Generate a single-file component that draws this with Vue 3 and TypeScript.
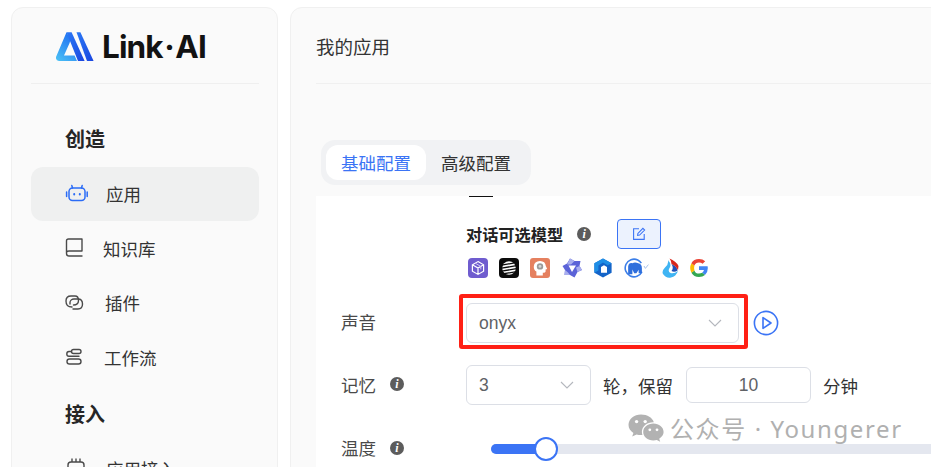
<script setup lang="ts">
const createItems = [
  { key: 'app', label: '应用', active: true },
  { key: 'book', label: '知识库', active: false },
  { key: 'plugin', label: '插件', active: false },
  { key: 'flow', label: '工作流', active: false },
]
</script>

<template>
  <div class="page">
    <aside class="sidebar">
      <div class="logo">
        <svg class="logo__mark" width="38" height="30" viewBox="0 0 38 30">
          <defs>
            <linearGradient id="logoLeft" x1="0" y1="1" x2="0.6" y2="0">
              <stop offset="0" stop-color="#4cc3f5" />
              <stop offset="1" stop-color="#1f6ff2" />
            </linearGradient>
            <linearGradient id="logoRight" x1="0" y1="0" x2="1" y2="1">
              <stop offset="0" stop-color="#2a78f5" />
              <stop offset="1" stop-color="#1a46e0" />
            </linearGradient>
          </defs>
          <path d="M10.5 0.2 L0 25 Q-0.4 29 3 29 L21 29 L18.6 23.4 L8 23.4 L13.6 11 L14.6 7 Z" fill="url(#logoLeft)" />
          <path d="M10.5 0.2 L15.6 0.2 L28.6 29 L22 29 Z" fill="url(#logoRight)" />
          <path d="M20.5 0.2 L24.4 0.2 L37.6 29 L31 29 Z" fill="url(#logoRight)" />
        </svg>
        <span class="logo__text">Link<span class="logo__dot">·</span>AI</span>
      </div>

      <div class="nav-title nav-title--first">创造</div>
      <div
        v-for="item in createItems"
        :key="item.key"
        class="nav-item"
        :class="['nav-item--' + item.key, { 'nav-item--active': item.active }]"
      >
        <svg class="nav-item__icon" width="24" height="24" viewBox="0 0 24 24" fill="none" stroke-linecap="round" stroke-linejoin="round">
          <g v-if="item.key === 'app'" stroke="#2b6cf6" stroke-width="1.5">
            <rect x="5" y="7" width="16" height="12.5" rx="3.5" />
            <path d="M8.5 7 L7.8 4.4 M17.5 7 L18.2 4.4 M2.6 11 V15.5 M23.2 11 V15.5" />
            <path d="M10.2 13 V13.5 M15.8 13 V13.5" stroke-width="2" />
          </g>
          <g v-else-if="item.key === 'book'" stroke="#4a4a4a" stroke-width="1.4">
            <path d="M2.5 17 V5 Q2.5 3 4.5 3 H18 V15 H5 Q2.5 15 2.5 17.5 Q2.5 20 5 20 H18" />
          </g>
          <g v-else-if="item.key === 'plugin'" stroke="#4a4a4a" stroke-width="1.4">
            <path d="M8 16 C3.5 16 2 14 2 10 C2 6.5 4 5 7 5 H11 C13.5 5 14.5 7 14.5 9.5 C14.5 12.5 12.5 14 9.5 14" />
            <path d="M6 13 V11.5 C6 9.5 8 8 10 8 H14 C17 8 18.5 10 18.5 13 C18.5 16 17 18 14 18 H9" />
          </g>
          <g v-else stroke="#4a4a4a" stroke-width="1.4">
            <rect x="7.5" y="4.5" width="9.5" height="4" rx="2" />
            <rect x="3" y="14" width="14" height="5" rx="2.5" />
            <path d="M7.5 6.5 H5 Q2.8 6.5 2.8 9 Q2.8 11.2 5 11.2 H15" />
          </g>
        </svg>
        <span>{{ item.label }}</span>
      </div>

      <div class="nav-title">接入</div>
      <div class="nav-item nav-item--app">
        <svg class="nav-item__icon" width="24" height="24" viewBox="0 0 24 24" fill="none" stroke="#4a4a4a" stroke-width="1.4">
          <rect x="4" y="6" width="16" height="14" rx="3" />
          <path d="M8 6 V2.5 M12 6 V2.5 M16 6 V2.5" />
        </svg>
        <span>应用接入</span>
      </div>
    </aside>

    <main class="main">
      <header class="main__head">我的应用</header>

      <div class="tabs">
        <div class="tabs__tab tabs__tab--active">基础配置</div>
        <div class="tabs__tab">高级配置</div>
      </div>

      <section class="form">
        <div class="form__stub"></div>

        <div class="models">
          <div class="models__head">
            <span class="models__title">对话可选模型</span>
            <i class="info">i</i>
            <button class="models__edit" type="button">
              <svg width="14" height="14" viewBox="0 0 14 14" fill="none" stroke="#3b74f5" stroke-width="1.1">
                <path d="M7 1.8 H1.6 V12.4 H12.2 V7" />
                <path d="M5.6 8.4 L5.9 6.4 L10.9 1.4 L12.6 3.1 L7.6 8.1 Z" />
              </svg>
            </button>
          </div>
          <div class="models__icons">
            <svg width="20" height="20" viewBox="0 0 20 20">
              <rect width="20" height="20" rx="4" fill="#6f5ccf" />
              <path d="M10 3.6 L15.6 6.8 V13.2 L10 16.4 L4.4 13.2 V6.8 Z M4.4 6.8 L10 10 L15.6 6.8 M10 10 V16.4" fill="none" stroke="#fff" stroke-width="1.2" />
              <path d="M7.2 5.2 L12.8 8.4 V11.4" fill="none" stroke="#cfc7f2" stroke-width="1" />
            </svg>
            <svg width="20" height="20" viewBox="0 0 20 20">
              <rect width="20" height="20" rx="4" fill="#0c0c0c" />
              <circle cx="10" cy="10" r="6.8" fill="#fff" />
              <path d="M2.6 7.2 L17 4.6 M2.6 10.2 L17.4 7.6 M2.6 13.2 L17.4 10.6 M3.4 16 L17.4 13.6" stroke="#0c0c0c" stroke-width="1.3" />
            </svg>
            <svg width="20" height="20" viewBox="0 0 20 20">
              <rect width="20" height="20" rx="3" fill="#e5805f" />
              <path d="M6.4 17.4 V13.6 Q3.6 11.8 3.8 8.4 Q4.2 3.2 10 3 Q15.4 3.2 15.8 8 L17.2 11 L15.6 11.6 V13.6 Q15.4 15 12.8 14.8 V17.4 Z" fill="#fff" />
              <circle cx="10" cy="8.4" r="3.2" fill="#9a9a9a" />
              <circle cx="10" cy="8.4" r="1.4" fill="#d6d6d6" />
            </svg>
            <svg width="20" height="20" viewBox="0 0 20 20">
              <path d="M8 0.5 L12.5 3 H18.5 L17.5 8 L20 12 L15.5 14 L12.5 19.5 L8 17 H2.5 L3 12 L0.5 8 L5 5.5 Z" fill="#5b63d8" />
              <path d="M8 0.5 L12.5 3 L9 6.5 H5 Z M17.5 8 L20 12 L15.5 14 L14 9.5 Z M3 12 L6 14.5 L8 17 H2.5 Z" fill="#a8aeee" />
              <path d="M6.5 7.5 H14 L10 14 Z" fill="#fff" />
            </svg>
            <svg width="20" height="20" viewBox="0 0 20 20">
              <path d="M10 0.4 L18.6 5.2 V14.8 L10 19.6 L1.4 14.8 V5.2 Z" fill="#1464c8" />
              <path d="M10 0.4 L18.6 5.2 L14.6 7.2 L10 4.6 L5.4 7.4 V12.6 L1.4 14.8 V5.2 Z" fill="#1f8fe6" />
              <path d="M8 9 L11 7.2 L14 9 V14.8 L8 14.8 Z" fill="#fff" />
            </svg>
            <svg width="25" height="20" viewBox="0 0 25 20">
              <circle cx="10" cy="10" r="8.8" fill="#fff" stroke="#3b7ee8" stroke-width="1.6" stroke-dasharray="46 9" transform="rotate(25 10 10)" />
              <path transform="translate(-1.6 -1.8) scale(1.25)" d="M4.6 14.4 V8.2 Q5 5 8 5.6 Q10 4.4 12.6 5.6 Q15.6 6 15.6 9.6 V13.6 L13 13.6 V10.8 L11.2 13.6 H9.4 L8 10.6 V14.4 Z" fill="#2f6fdc" />
              <path d="M20 8 L21.4 10.4 L24.4 6.6" fill="none" stroke="#a9c2ea" stroke-width="1" />
            </svg>
            <svg width="20" height="20" viewBox="0 0 20 20">
              <path d="M8 2 Q9 6 5 9.5 Q1.5 13 3 16 Q6 20.5 11 19.5 Q16 18.5 18 13 Q14 16 10.5 15 Q7.5 13.5 9.5 10 Q12 6.5 8 2 Z" fill="#3fb4f3" />
              <path d="M11.5 6 Q14 10 11.5 13 Q14.5 14.5 17.6 12.4 Q16.5 8 11.5 6 Z" fill="#1d4fb8" />
              <path d="M9.5 0.5 Q16 3 18.5 8 L18 12 Q15.5 7.5 11.5 6 Q11.5 3 9.5 0.5 Z" fill="#d8261c" />
            </svg>
            <svg class="models__google" width="20" height="20" viewBox="0 0 20 20">
              <path d="M18.8 10.2 Q18.8 9.2 18.6 8.2 H10 V12 H15 Q14.6 13.8 13.1 14.8 L16 17.1 Q18.8 14.6 18.8 10.2 Z" fill="#4285f4" />
              <path d="M10 19 Q13.6 19 16 17.1 L13.1 14.8 Q11.8 15.6 10 15.6 Q6.6 15.6 5.4 12.4 L2.4 14.8 Q4.8 19 10 19 Z" fill="#34a853" />
              <path d="M5.4 12.4 Q4.8 10 5.4 7.6 L2.4 5.2 Q0 10 2.4 14.8 Z" fill="#fbbc05" />
              <path d="M10 4.4 Q12.2 4.4 13.6 5.8 L16.2 3.2 Q13.8 1 10 1 Q4.8 1 2.4 5.2 L5.4 7.6 Q6.6 4.4 10 4.4 Z" fill="#ea4335" />
            </svg>
          </div>
        </div>

        <div class="row row--voice">
          <label class="row__label">声音</label>
          <div class="select select--voice">
            <span>onyx</span>
            <svg class="select__arrow" width="14" height="8" viewBox="0 0 14 8" fill="none" stroke="#b4b7bd" stroke-width="1.1">
              <path d="M1 1 L7 7 L13 1" />
            </svg>
            <span class="select__mark"></span>
          </div>
          <svg class="play" width="26" height="26" viewBox="0 0 26 26" fill="none" stroke="#3b74f5" stroke-width="1.6" stroke-linejoin="round">
            <circle cx="13" cy="13" r="11.6" />
            <path d="M10 7.6 L18 13 L10 18.4 Z" />
          </svg>
        </div>

        <div class="row row--memory">
          <label class="row__label">记忆<i class="info info--label">i</i></label>
          <div class="select select--memory">
            <span>3</span>
            <svg class="select__arrow" width="14" height="8" viewBox="0 0 14 8" fill="none" stroke="#b4b7bd" stroke-width="1.1">
              <path d="M1 1 L7 7 L13 1" />
            </svg>
          </div>
          <span class="row__text row__text--keep">轮，保留</span>
          <div class="number">10</div>
          <span class="row__text">分钟</span>
        </div>

        <div class="row row--temp">
          <label class="row__label">温度<i class="info info--label">i</i></label>
          <div class="slider">
            <div class="slider__fill"></div>
            <div class="slider__thumb"></div>
          </div>
        </div>
      </section>
    </main>

    <div class="watermark">
      <svg width="36" height="30" viewBox="0 0 36 30" fill="#b2b2b2">
        <path d="M13 0.5 C6 0.5 0.5 5 0.5 10.8 C0.5 14.2 2.4 17 5.4 19 L4.2 22.6 L8.6 20.4 C10 20.8 11.4 21 13 21 C13.5 21 14 21 14.4 20.9 C14 19.8 13.9 18.8 13.9 17.8 C13.9 12.4 19 8.2 25.2 8.2 C25.4 8.2 25.6 8.2 25.8 8.2 C24.6 3.8 19.4 0.5 13 0.5 Z" />
        <circle cx="8.6" cy="7.6" r="1.7" fill="#fff" />
        <circle cx="17.2" cy="7.6" r="1.7" fill="#fff" />
        <path d="M35.6 18 C35.6 13.2 31 9.6 25.4 9.6 C19.6 9.6 15.2 13.2 15.2 18 C15.2 22.8 19.6 26.4 25.4 26.4 C26.6 26.4 27.8 26.2 28.8 25.9 L32.2 27.8 L31.2 24.8 C33.8 23 35.6 20.8 35.6 18 Z" />
        <circle cx="21.8" cy="15.8" r="1.4" fill="#fff" />
        <circle cx="29" cy="15.8" r="1.4" fill="#fff" />
      </svg>
      <span>公众号 · Youngerer</span>
    </div>
  </div>
</template>

<style>
html,
body {
  margin: 0;
  background: #fff;
}
</style>

<style scoped>
.page {
  position: relative;
  display: flex;
  gap: 12px;
  width: 931px;
  height: 467px;
  padding: 7px 0 0 11px;
  box-sizing: border-box;
  overflow: hidden;
  font-family: "Noto Sans CJK SC", "Noto Sans", sans-serif;
  color: #333;
  font-size: 17.5px;
}

.sidebar {
  flex: none;
  box-sizing: border-box;
  width: 267px;
  height: 560px;
  padding: 0 18px 0 19px;
  background: #fafafa;
  border: 1px solid #f0f0f0;
  border-radius: 12px;
}

.logo {
  display: flex;
  align-items: center;
  gap: 8px;
  height: 75px;
  padding-left: 25px;
  border-bottom: 1px solid #efefef;
}

.logo__mark {
  margin-top: 2px;
}

.logo__text {
  margin-top: 3px;
  font-family: Inter, sans-serif;
  font-size: 31.5px;
  font-weight: 700;
  line-height: 1;
  color: #121212;
  letter-spacing: -0.9px;
  white-space: nowrap;
}

.logo__dot {
  margin: 0 1.5px;
}

.nav-title {
  display: flex;
  align-items: center;
  box-sizing: border-box;
  height: 58px;
  padding-left: 34px;
  font-size: 20px;
  font-weight: 700;
  color: #262626;
}

.nav-title--first {
  height: 54px;
  margin-top: 29px;
  padding-bottom: 4px;
}

.nav-item {
  display: flex;
  align-items: center;
  box-sizing: border-box;
  gap: 15px;
  height: 54.3px;
  padding-left: 33px;
  border-radius: 12px;
  color: #333;
}

.nav-item--app {
  gap: 18px;
  padding-bottom: 2px;
}

.nav-item--plugin {
  gap: 17px;
}

.nav-item--flow {
  gap: 16px;
}

.nav-item--active {
  background: #eff0f0;
}

.main {
  flex: none;
  box-sizing: border-box;
  width: 720px;
  height: 560px;
  padding: 0 0 0 25px;
  background: #fafafa;
  border: 1px solid #f0f0f0;
  border-radius: 12px;
}

.main__head {
  display: flex;
  align-items: center;
  height: 75px;
  border-bottom: 1px solid #f0f0f0;
  font-size: 18.5px;
  color: #333;
}

.tabs {
  display: flex;
  width: fit-content;
  margin: 56px 0 0 5px;
  padding: 5px;
  background: #f1f2f4;
  border-radius: 14px;
}

.tabs__tab {
  display: flex;
  align-items: center;
  justify-content: center;
  width: 100px;
  height: 35px;
  padding-bottom: 1px;
  box-sizing: border-box;
  border-radius: 12px;
  color: #333;
}

.tabs__tab--active {
  background: #fff;
  color: #3b74f5;
}

.form {
  position: relative;
  margin-top: 11px;
  padding-left: 25px;
  background: #fff;
  height: 300px;
}

.form__stub {
  position: absolute;
  left: 153px;
  top: 0;
  width: 24px;
  height: 1px;
  background: #111;
}

.models {
  padding: 23px 0 0 125px;
}

.models__head {
  display: flex;
  align-items: center;
  height: 30px;
}

.models__title {
  font-size: 16.2px;
  font-weight: 700;
  color: #222;
}

.models__edit {
  width: 44px;
  height: 30px;
  margin-left: 26px;
  padding: 0;
  display: flex;
  align-items: center;
  justify-content: center;
  background: #ecf2fe;
  border: 1px solid #3b74f5;
  border-radius: 4px;
}

.models__icons {
  display: flex;
  align-items: center;
  gap: 11.2px;
  margin-top: 9px;
  padding-left: 2px;
}

.models__google {
  margin-left: -2px;
}

.info {
  display: inline-flex;
  align-items: center;
  justify-content: center;
  flex: none;
  width: 14px;
  height: 14px;
  margin-left: 14px;
  border-radius: 50%;
  background: #5c5c5c;
  color: #fff;
  font-family: "Liberation Serif", serif;
  font-size: 12px;
  font-weight: 700;
  font-style: italic;
  line-height: 1;
}

.info--label {
  margin-left: 14px;
}

.row {
  display: flex;
  align-items: center;
}

.row--voice {
  margin-top: 25px;
}

.row--voice .row__label {
  padding-bottom: 4px;
}

.row--memory {
  margin-top: 22px;
}

.row--temp {
  margin-top: 30px;
}

.row__label {
  display: flex;
  align-items: center;
  flex: none;
  box-sizing: border-box;
  width: 125px;
  padding-bottom: 2px;
  color: #4a4a4a;
}

.row__text {
  margin-left: 12px;
  color: #333;
}

.select {
  position: relative;
  display: flex;
  align-items: center;
  justify-content: space-between;
  box-sizing: border-box;
  height: 40px;
  padding: 0 16px 0 12px;
  background: #fff;
  border: 1px solid #dcdfe6;
  border-radius: 6px;
  color: #606266;
  font-family: "Liberation Sans", "Noto Sans CJK SC", sans-serif;
}

.select--voice {
  width: 273px;
}

.select--memory {
  width: 125px;
}

.select__mark {
  position: absolute;
  left: -8px;
  top: -10px;
  right: -10px;
  bottom: -7px;
  border: 4px solid #ff2015;
  border-radius: 3px;
  pointer-events: none;
}

.play {
  margin-left: 14px;
}

.number {
  display: flex;
  align-items: center;
  justify-content: center;
  box-sizing: border-box;
  width: 125px;
  height: 36px;
  margin-left: 13px;
  border: 1px solid #dcdfe6;
  border-radius: 6px;
  color: #606266;
  font-family: "Liberation Sans", sans-serif;
}

.slider {
  position: relative;
  flex: none;
  width: 500px;
  height: 10px;
  margin-left: 25px;
  background: #e4e7ef;
  border-radius: 5px;
}

.slider__fill {
  width: 55px;
  height: 10px;
  background: #3b74f5;
  border-radius: 5px 0 0 5px;
}

.slider__thumb {
  position: absolute;
  left: 43px;
  top: -7px;
  box-sizing: border-box;
  width: 24px;
  height: 24px;
  background: #fff;
  border: 2px solid #3b74f5;
  border-radius: 50%;
}

.watermark {
  position: absolute;
  left: 628px;
  top: 414px;
  display: flex;
  align-items: center;
  gap: 6px;
  color: #b0b0b0;
  font-family: "Noto Sans", "Noto Sans CJK SC", sans-serif;
  font-size: 24px;
  letter-spacing: 1.6px;
  line-height: 30px;
  white-space: nowrap;
}
</style>
